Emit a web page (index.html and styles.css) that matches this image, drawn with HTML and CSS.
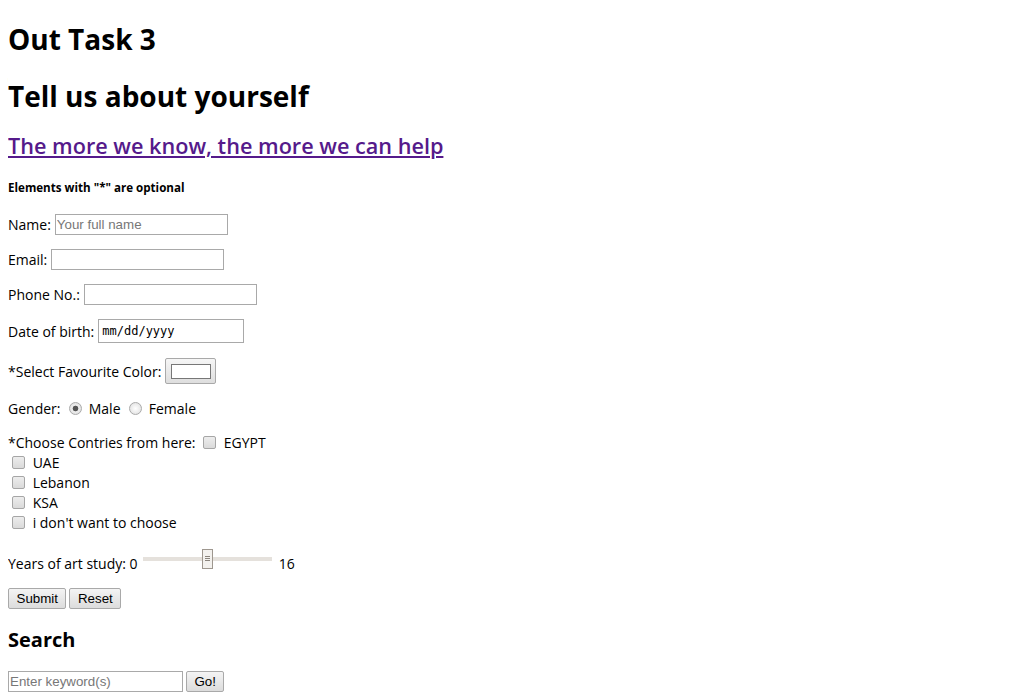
FILE: index.html
```html
<!DOCTYPE html>
<html>
<head>
<meta charset="utf-8">
<title>Out Task 3</title>
<link rel="stylesheet" href="styles.css">
</head>
<body>
<h1 class="title">Out Task 3</h1>
<h2 class="title t2">Tell us about yourself</h2>
<h3 class="sub"><a href="#">The more we know, the more we can help</a></h3>
<h5 class="note">Elements with "*" are optional</h5>
<form class="form">
  <div class="row">Name:<input class="text" type="text" placeholder="Your full name"></div>
  <div class="row">Email:<input class="text" type="text"></div>
  <div class="row">Phone No.:<input class="text" type="text"></div>
  <div class="row r-date">Date of birth:<span class="date">mm/dd/yyyy</span></div>
  <div class="row r-color">*Select Favourite Color:<span class="colorbtn"><span class="swatch"></span></span></div>
  <div class="gender">Gender: <span class="radio on"></span> Male <span class="radio"></span> Female</div>
  <div class="countries">
    <div>*Choose Contries from here: <span class="check first"></span> EGYPT</div>
    <div class="opt"><span class="check"></span> UAE</div>
    <div class="opt"><span class="check"></span> Lebanon</div>
    <div class="opt"><span class="check"></span> KSA</div>
    <div class="opt"><span class="check"></span> i don't want to choose</div>
  </div>
  <div class="years">Years of art study: 0 <span class="range"><span class="thumb"></span></span> 16</div>
  <div class="row btns"><button class="btn" type="button">Submit</button><button class="btn" type="button">Reset</button></div>
</form>
<h3 class="search">Search</h3>
<div class="row btns"><input class="text search-in" type="text" placeholder="Enter keyword(s)"><button class="btn" type="button">Go!</button></div>
</body>
</html>
```
FILE: styles.css
```css
body {
  margin: 8px;
  font-family: "Open Sans", sans-serif;
  font-size: 14px;
  color: #000;
  background: #fff;
}
.title {
  font-size: 28px;
  font-weight: 700;
  margin: 12px 0 19px;
  line-height: 38px;
}
.title.t2 { margin: 0 0 15px; }
.sub {
  font-size: 21.65px;
  font-weight: 600;
  margin: 0 0 18px;
  line-height: 32px;
}
.sub a { color: #551a8b; }
.note {
  font-size: 11.6px;
  font-weight: 700;
  margin: 0 0 19px;
  line-height: 15px;
}
.form { margin: 0; }
.row {
  display: flex;
  align-items: center;
  gap: 4px;
  height: 21px;
  margin: 0 0 14px;
}
.r-date { height: 24px; }
.r-color { height: 28px; }
.text {
  font-family: Arial, "Liberation Sans", sans-serif;
  font-size: 13.33px;
  width: 169px;
  height: 19px;
  padding: 0 1px;
  border: 1px solid #a9a9a9;
  box-sizing: content-box;
  margin: 0;
}
.text::placeholder { color: #777; }
.date {
  display: inline-block;
  width: 141px;
  height: 22px;
  border: 1px solid #a9a9a9;
  font-family: "DejaVu Sans Mono", monospace;
  font-size: 12px;
  line-height: 22px;
  padding-left: 3px;
  box-sizing: content-box;
}
.colorbtn {
  display: inline-flex;
  align-items: center;
  justify-content: center;
  width: 49px;
  height: 24px;
  border: 1px solid #a9a9a9;
  border-radius: 2px;
  background: linear-gradient(#f6f6f6, #dedede);
}
.swatch {
  width: 38px;
  height: 13px;
  border: 1px solid #777;
  background: #fff;
}
.gender {
  height: 20px;
  line-height: 20px;
  margin: 0 0 14px;
}
.radio {
  display: inline-block;
  width: 11px;
  height: 11px;
  border: 1px solid #aaa;
  border-radius: 50%;
  background: radial-gradient(#fff, #dcdcdc);
  vertical-align: -1px;
  margin: 0 3px 0 5px;
  box-sizing: content-box;
}
.radio.on {
  background: radial-gradient(circle, #555 0 2.5px, #eee 3.2px, #d8d8d8);
}
.countries { margin: 0 0 14px; line-height: 20px; }
.countries .opt { padding-left: 3px; }
.check {
  display: inline-block;
  width: 11px;
  height: 11px;
  border: 1px solid #a6a6a6;
  border-radius: 2px;
  background: linear-gradient(#ededed, #dadada);
  vertical-align: -1px;
  margin-right: 4px;
  margin-left: 1px;
}
.check.first { margin-left: 4px; }
.years {
  height: 28px;
  padding-top: 6px;
  box-sizing: border-box;
  line-height: 22px;
  margin: 0 0 13px;
}
.range {
  position: relative;
  display: inline-block;
  width: 129px;
  height: 4px;
  background: #e5e1dc;
  vertical-align: 8px;
  margin: 0 3px 0 2px;
}
.thumb {
  position: absolute;
  left: 59px;
  top: -8px;
  width: 9px;
  height: 18px;
  border: 1px solid #9e978f;
  background:
    linear-gradient(#8a847d, #8a847d) 2px 6px / 5px 1px no-repeat,
    linear-gradient(#8a847d, #8a847d) 2px 8px / 5px 1px no-repeat,
    linear-gradient(#8a847d, #8a847d) 2px 10px / 5px 1px no-repeat,
    #f3f1ee;
}
.btns { gap: 3px; }
.btn {
  font-family: Arial, "Liberation Sans", sans-serif;
  font-size: 13.33px;
  height: 21px;
  padding: 0 7.5px;
  border: 1px solid #a9a9a9;
  border-radius: 2px;
  background: linear-gradient(#f4f4f4, #dcdcdc);
  color: #000;
  margin: 0;
}
.search {
  font-size: 20px;
  font-weight: 700;
  margin: 17px 0 18px;
  line-height: 27px;
}
.search-in { width: 171px; }
```
